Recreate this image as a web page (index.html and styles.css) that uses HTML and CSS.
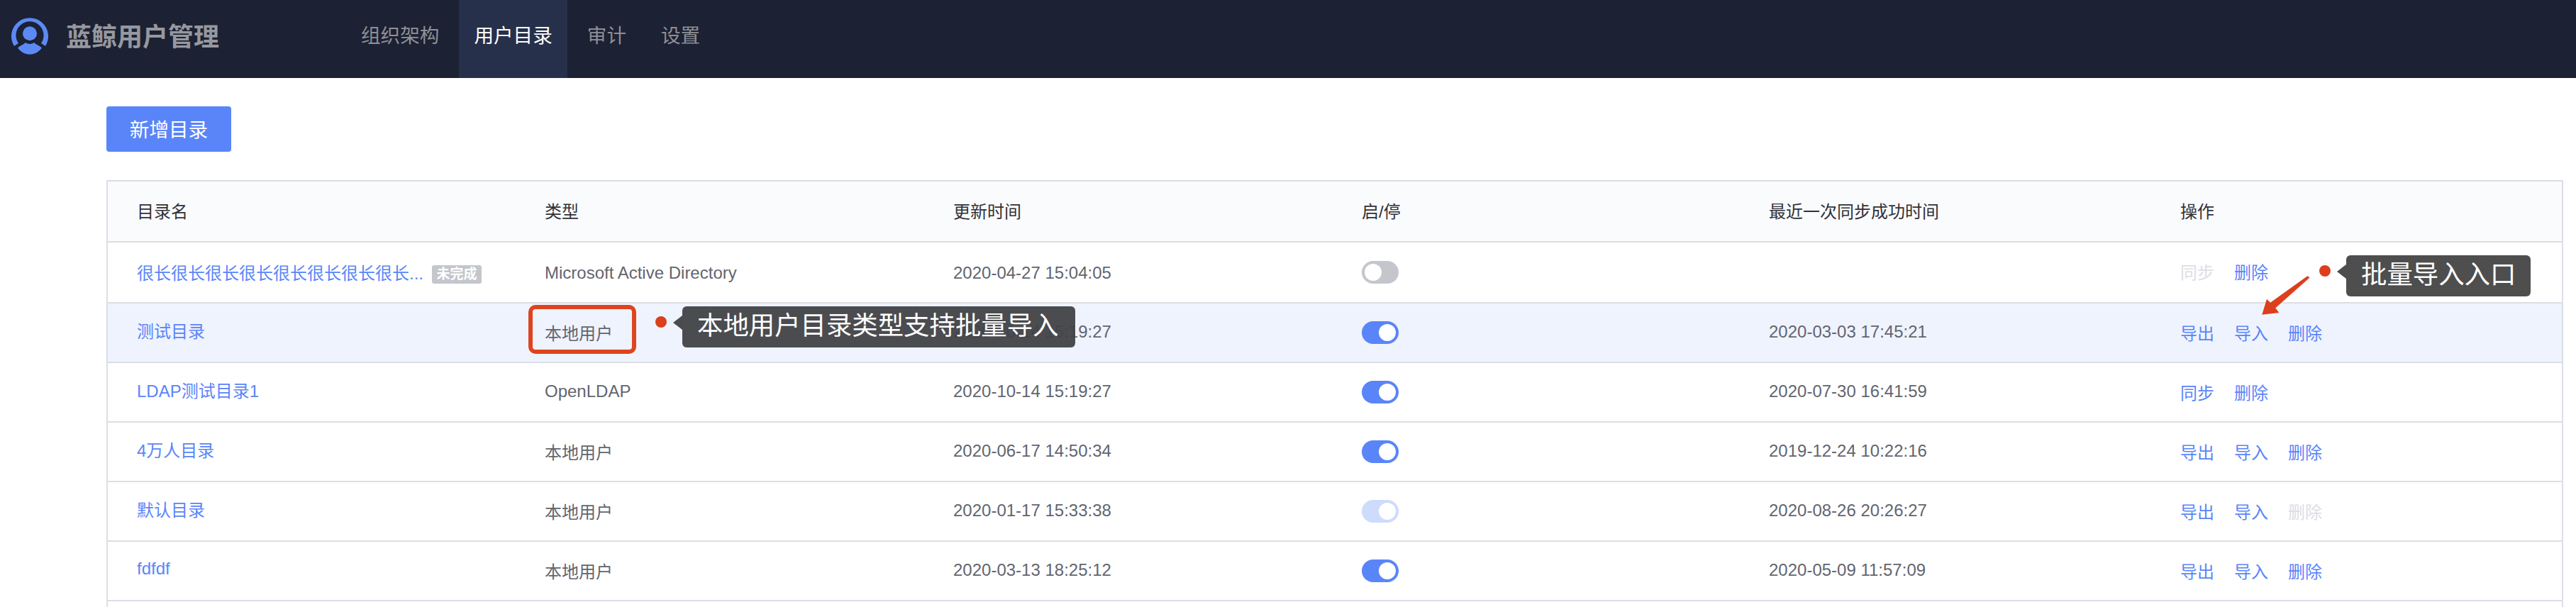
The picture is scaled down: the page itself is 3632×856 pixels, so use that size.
FILE: index.html
```html
<!DOCTYPE html>
<html lang="en">

<head>
    <meta charset="UTF-8">
    <title>蓝鲸用户管理</title>
    <link rel="stylesheet" href="styles.css">
</head>

<body>
    <header class="topbar">
        <div class="brand">
            <svg class="logo" viewBox="0 0 52 53">
                <path fill="#5b8af5" d="M4 41A26 26 0 1 1 48 41L42 37A19.500 19.500 0 1 0 10 37Z" />
                <circle fill="#5b8af5" cx="26" cy="23.300" r="10" />
                <path fill="#5b8af5" d="M9 43.500C13 40 17 39 20 36C23 38.500 29 38.500 32 36C35 39 39 40 43 43.500C39 49 33 52.700 26 52.700S13 49 9 43.500Z" />
            </svg>
            <span class="brand-name">蓝鲸用户管理</span>
        </div>
        <nav class="nav">
            <a class="nav-item">组织架构</a>
            <a class="nav-item active">用户目录</a>
            <a class="nav-item">审计</a>
            <a class="nav-item">设置</a>
        </nav>
    </header>

    <main class="content">
        <button type="button" class="add-btn">新增目录</button>

        <table class="dir-table">
            <colgroup>
                <col class="col-name">
                <col class="col-type">
                <col class="col-time">
                <col class="col-switch">
                <col class="col-sync">
                <col>
            </colgroup>
            <thead>
                <tr>
                    <th>目录名</th>
                    <th>类型</th>
                    <th>更新时间</th>
                    <th>启/停</th>
                    <th>最近一次同步成功时间</th>
                    <th>操作</th>
                </tr>
            </thead>
            <tbody>
                <tr class="first">
                    <td class="name"><a class="link">很长很长很长很长很长很长很长很长...</a><span class="tag">未完成</span></td>
                    <td>Microsoft Active Directory</td>
                    <td>2020-04-27 15:04:05</td>
                    <td class="toggle"><span class="switch off"></span></td>
                    <td></td>
                    <td class="actions"><a class="muted">同步</a><a class="link">删除</a></td>
                </tr>
                <tr class="hover">
                    <td class="name"><a class="link">测试目录</a></td>
                    <td>本地用户</td>
                    <td>2020-10-14 15:19:27</td>
                    <td class="toggle"><span class="switch"></span></td>
                    <td>2020-03-03 17:45:21</td>
                    <td class="actions"><a class="link">导出</a><a class="link">导入</a><a class="link">删除</a></td>
                </tr>
                <tr>
                    <td class="name"><a class="link">LDAP测试目录1</a></td>
                    <td>OpenLDAP</td>
                    <td>2020-10-14 15:19:27</td>
                    <td class="toggle"><span class="switch"></span></td>
                    <td>2020-07-30 16:41:59</td>
                    <td class="actions"><a class="link">同步</a><a class="link">删除</a></td>
                </tr>
                <tr>
                    <td class="name"><a class="link">4万人目录</a></td>
                    <td>本地用户</td>
                    <td>2020-06-17 14:50:34</td>
                    <td class="toggle"><span class="switch"></span></td>
                    <td>2019-12-24 10:22:16</td>
                    <td class="actions"><a class="link">导出</a><a class="link">导入</a><a class="link">删除</a></td>
                </tr>
                <tr>
                    <td class="name"><a class="link">默认目录</a></td>
                    <td>本地用户</td>
                    <td>2020-01-17 15:33:38</td>
                    <td class="toggle"><span class="switch disabled"></span></td>
                    <td>2020-08-26 20:26:27</td>
                    <td class="actions"><a class="link">导出</a><a class="link">导入</a><a class="muted">删除</a></td>
                </tr>
                <tr>
                    <td class="name"><a class="link">fdfdf</a></td>
                    <td>本地用户</td>
                    <td>2020-03-13 18:25:12</td>
                    <td class="toggle"><span class="switch"></span></td>
                    <td>2020-05-09 11:57:09</td>
                    <td class="actions"><a class="link">导出</a><a class="link">导入</a><a class="link">删除</a></td>
                </tr>
                <tr class="rest">
                    <td></td>
                    <td></td>
                    <td></td>
                    <td></td>
                    <td></td>
                    <td></td>
                </tr>
            </tbody>
        </table>
    </main>

    <!-- annotations drawn on top of the screenshot -->
    <div class="mark-box"></div>
    <span class="dot dot-type"></span>
    <div class="tip tip-type">本地用户目录类型支持批量导入</div>
    <span class="dot dot-import"></span>
    <div class="tip tip-import">批量导入入口</div>
    <svg class="arrow" viewBox="0 0 72 58">
        <path fill="#dc3f1c" d="M1.300 55.700L8 33.700L13 38.700L65 1.500Q68 1 68 4L20.300 46.300L25.300 53Z" />
    </svg>
</body>

</html>
```

FILE: styles.css
```css
html,
body {
    margin: 0;
    height: 856px;
    overflow: hidden;
}

body {
    position: relative;
    font-family: "Liberation Sans", "Noto Sans CJK SC", sans-serif;
    background-color: #fff;
}

.topbar {
    display: flex;
    height: 110px;
    background-color: #1c2133;
}

.brand {
    display: flex;
    align-items: center;
    width: 488px;
    padding: 0 0 13px 16px;
    box-sizing: border-box;
}

.logo {
    width: 52px;
    height: 53px;
    margin-right: 25px;
    margin-top: 4px;
}

.brand-name {
    font-size: 36px;
    font-weight: 700;
    color: #96989f;
}

.nav {
    display: flex;
    gap: 7px;
}

.nav-item {
    display: flex;
    align-items: center;
    padding: 0 21px 14px;
    font-size: 27.600px;
    color: #8e9096;
}

.nav-item.active {
    color: #fff;
    background-color: #27304a;
}

.content {
    padding: 40px 18px 0 150px;
}

.add-btn {
    display: block;
    width: 176px;
    height: 64px;
    padding: 0 0 2px;
    border: none;
    border-radius: 4px;
    font-family: inherit;
    font-size: 27.600px;
    color: #fff;
    background-color: #5a85f9;
}

.dir-table {
    width: 100%;
    margin-top: 40px;
    table-layout: fixed;
    border-spacing: 0;
    border: 2px solid #dcdee5;
    border-bottom: none;
    font-size: 24px;
    color: #63656e;
}

.col-name {
    width: 575px;
}

.col-type,
.col-time {
    width: 576px;
}

.col-switch {
    width: 574px;
}

.col-sync {
    width: 580px;
}

th {
    height: 84px;
    padding: 0 0 4px 41px;
    box-sizing: border-box;
    font-weight: 400;
    text-align: left;
    color: #313238;
    background-color: #fafbfd;
}

td {
    height: 84px;
    padding: 0 0 2px 41px;
    border-top: 2px solid #dcdee5;
    box-sizing: border-box;
}

.first td {
    height: 86px;
    padding-top: 2px;
    padding-bottom: 0;
}

.rest td {
    height: 10px;
    padding: 0;
}

.hover td {
    background-color: #eff3fe;
}

td.name {
    padding-bottom: 7px;
}

.first td.name {
    padding-top: 0;
    padding-bottom: 2px;
}

td.toggle {
    padding-bottom: 0;
}

.first td.toggle {
    padding-top: 0;
}

.first td.actions {
    padding-top: 0;
    padding-bottom: 4px;
}

.link {
    color: #5a85f9;
}

.muted {
    color: #dcdee5;
}

.tag {
    display: inline-block;
    margin-left: 12px;
    padding: 0 6.500px;
    border-radius: 3px;
    font-size: 19px;
    font-weight: 700;
    line-height: 26px;
    color: #fff;
    background-color: #c4c6cc;
    vertical-align: 1px;
}

.actions a {
    margin-right: 28px;
}

.switch {
    display: block;
    position: relative;
    width: 52px;
    height: 32px;
    border-radius: 16px;
    background-color: #5a85f9;
}

.switch::after {
    content: "";
    position: absolute;
    top: 4px;
    right: 4px;
    width: 24px;
    height: 24px;
    border-radius: 50%;
    background-color: #fff;
}

.switch.off {
    background-color: #c4c6cc;
}

.switch.off::after {
    right: auto;
    left: 4px;
}

.switch.disabled {
    background-color: #cddbfd;
}

/* annotations */
.mark-box {
    position: absolute;
    left: 745px;
    top: 430px;
    width: 152px;
    height: 69px;
    box-sizing: border-box;
    border: 6px solid #de4420;
    border-radius: 10px;
}

.dot {
    position: absolute;
    width: 16px;
    height: 16px;
    border-radius: 50%;
    background-color: #dc3f1c;
}

.dot-type {
    left: 924px;
    top: 446px;
}

.dot-import {
    left: 3270px;
    top: 374px;
}

.tip {
    position: absolute;
    height: 58px;
    padding: 0 21px;
    box-sizing: border-box;
    border-radius: 6px;
    font-size: 36.400px;
    line-height: 56px;
    white-space: nowrap;
    color: #fff;
}

.tip::before {
    content: "";
    position: absolute;
    left: -13px;
    top: 13px;
    border-style: solid;
    border-width: 10px 13px 10px 0;
    border-color: transparent;
    border-right-color: inherit;
}

.tip-type {
    left: 962px;
    top: 432px;
    width: 554px;
    background-color: rgba(65, 66, 71, 0.95);
    border-color: #4a4b50;
}

.tip-import {
    left: 3308px;
    top: 360px;
    width: 260px;
    background-color: #4e4e4e;
    border-color: #4e4e4e;
}

.arrow {
    position: absolute;
    left: 3188px;
    top: 388px;
    width: 72px;
    height: 58px;
}
```
